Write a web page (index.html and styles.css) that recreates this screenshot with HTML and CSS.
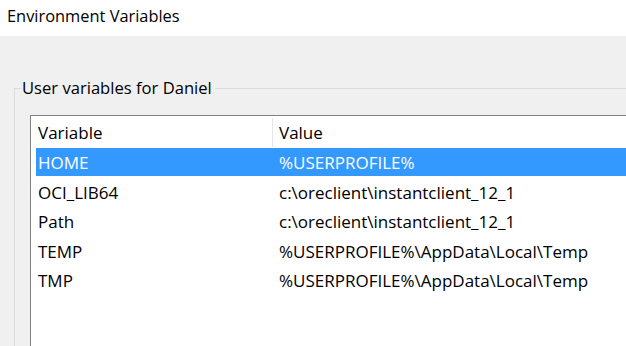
FILE: index.html
```html
<!DOCTYPE html>
<html lang="en">
  <head>
    <meta charset="UTF-8" />
    <meta name="viewport" content="width=device-width, initial-scale=1.0" />
    <title>Environment Variables</title>
    <link rel="stylesheet" href="styles.css">
  </head>
  <body>
    <div class="titlebar">Environment Variables</div>
    <fieldset class="group">
      <legend>User variables for Daniel</legend>
      <div class="listbox">
        <div class="list-header">
          <div class="col-name">Variable</div>
          <div class="col-value">Value</div>
        </div>
        <div class="list-row selected">
          <div class="col-name">HOME</div>
          <div class="col-value">%USERPROFILE%</div>
        </div>
        <div class="list-row">
          <div class="col-name">OCI_LIB64</div>
          <div class="col-value">c:\oreclient\instantclient_12_1</div>
        </div>
        <div class="list-row">
          <div class="col-name">Path</div>
          <div class="col-value">c:\oreclient\instantclient_12_1</div>
        </div>
        <div class="list-row">
          <div class="col-name">TEMP</div>
          <div class="col-value">%USERPROFILE%\AppData\Local\Temp</div>
        </div>
        <div class="list-row">
          <div class="col-name">TMP</div>
          <div class="col-value">%USERPROFILE%\AppData\Local\Temp</div>
        </div>
      </div>
    </fieldset>
  </body>
</html>
```

FILE: styles.css
```css
* {
  box-sizing: border-box;
}
html,
body {
  margin: 0;
  height: 100%;
  overflow: hidden;
}
body {
  font-family: "Open Sans", "Noto Sans", sans-serif;
  background-color: #f0f0f0;
  color: #000000;
}
.titlebar {
  height: 36px;
  line-height: 32px;
  padding-left: 7px;
  font-size: 16.4px;
  background-color: #ffffff;
}
.group {
  width: 700px;
  margin: 41px 0 0 14px;
  padding: 0 0 0 15px;
  border: 1px solid #dcdcdc;
  min-width: 0;
}
.group legend {
  margin-left: -9px;
  padding: 0 3px 0 1px;
  font-size: 16.6px;
  line-height: 22px;
}
.listbox {
  margin-top: 16px;
  height: 400px;
  border: 1px solid #828282;
  background-color: #ffffff;
  font-size: 17px;
}
.list-header {
  display: flex;
  height: 32px;
  align-items: center;
}
.list-header .col-name {
  width: 242px;
  padding-left: 7px;
  border-right: 1px solid #e5e5e5;
  line-height: 29px;
}
.list-header .col-value {
  padding-left: 6px;
}
.list-row {
  display: flex;
  align-items: center;
  height: 29.5px;
  margin-left: 5px;
}
.list-row .col-name {
  width: 243px;
  padding-left: 2px;
}
.list-row.selected {
  height: 28px;
  margin-bottom: 1.5px;
  background-color: #3399ff;
  color: #ffffff;
}
```
